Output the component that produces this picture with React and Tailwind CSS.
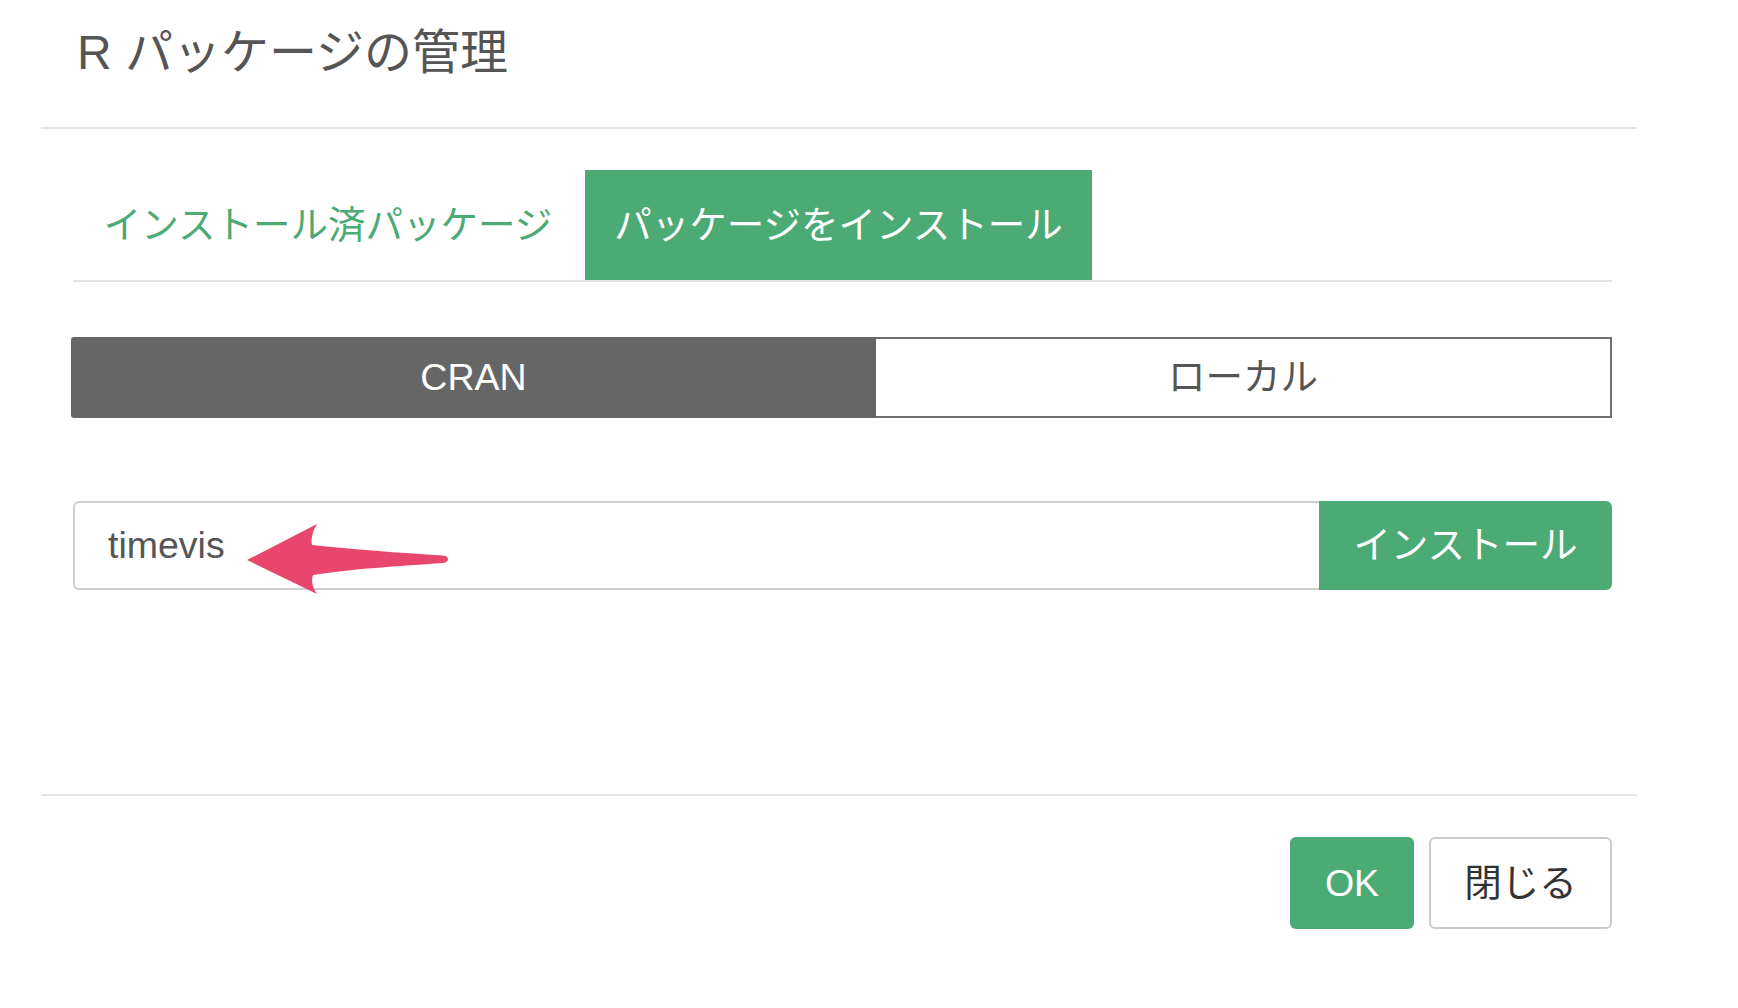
import React from 'react';

const green = 'bg-[#4caa74]';

const Arrow = () => (
  <svg
    className="absolute left-[240px] top-[515px] w-[215px] h-[85px]"
    viewBox="240 515 215 85"
  >
    <path
      d="M247 560 L317 524 Q310 536 312 545 C350 549 400 553 443 555.5 Q448 556 448 559 Q448 562 443 563 C400 566 350 569 313 575 Q310 584 317 594 Z"
      fill="#e9466d"
    />
  </svg>
);

const App = () => {
  return (
    <div className="relative w-[1738px] h-[1008px] bg-white font-['Liberation_Sans','Noto_Sans_CJK_JP',sans-serif]">
      <div className="ml-[41px] w-[1596px]">
        {/* header */}
        <div className="h-[129px] border-b-2 border-[#e5e5e5] pl-[36px] pt-[29px]">
          <h4 className="text-[48px] leading-[48px] text-[#555]">R パッケージの管理</h4>
        </div>

        {/* body */}
        <div className="h-[665px] pl-[32px] pr-[25px] pt-[41px]">
          <div className="flex border-b-2 border-[#e3e3e3]">
            <div className="w-[510px] mr-[2px] h-[110px] flex items-center justify-center text-[37.5px] text-[#4caa74]">
              インストール済パッケージ
            </div>
            <div className={`w-[507px] h-[110px] flex items-center justify-center text-[37.5px] text-white ${green}`}>
              パッケージをインストール
            </div>
          </div>

          <div className="mt-[55px] -ml-[2px] h-[81px] flex">
            <div className="w-[805px] bg-[#666] rounded-l-[3px] flex items-center justify-center text-[37.5px] text-white">
              CRAN
            </div>
            <div className="flex-1 border-2 border-l-0 border-[#6e6e6e] flex items-center justify-center text-[37.5px] text-[#555]">
              ローカル
            </div>
          </div>

          <div className="mt-[83px] h-[89px] flex">
            <div className="w-[1246px] border-2 border-r-0 border-[#cfcfcf] rounded-l-[6px] flex items-center pl-[33px] text-[37.5px] text-[#555]">
              timevis
            </div>
            <div className={`flex-1 rounded-r-[6px] flex items-center justify-center text-[37.5px] text-white ${green}`}>
              インストール
            </div>
          </div>
        </div>

        {/* footer */}
        <div className="border-t-2 border-[#e5e5e5] pt-[41px] pr-[25px] flex justify-end gap-[15px]">
          <button className={`w-[124px] h-[92px] rounded-[6px] text-[37.5px] text-white ${green}`}>
            OK
          </button>
          <button className="w-[183px] h-[92px] rounded-[6px] border-2 border-[#cccccc] bg-white text-[37.5px] text-[#333]">
            閉じる
          </button>
        </div>
      </div>

      <Arrow />
    </div>
  );
};

export default App;
